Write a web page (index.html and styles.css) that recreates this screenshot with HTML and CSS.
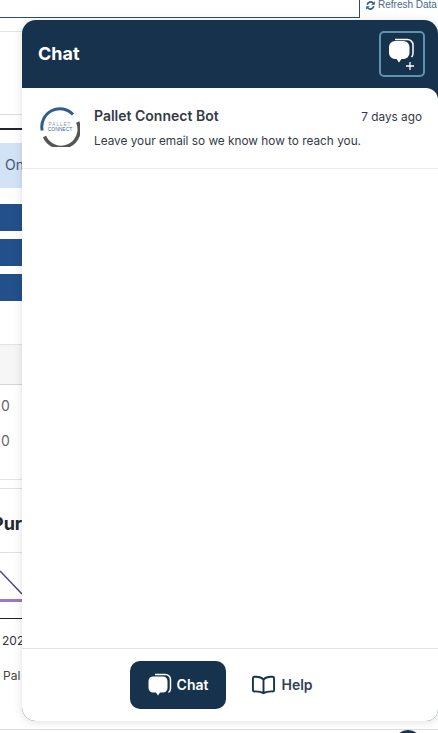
FILE: index.html
```html
<!DOCTYPE html>
<html lang="en">
<head>
<meta charset="utf-8">
<title>Chat</title>
<link rel="stylesheet" href="styles.css">
</head>
<body>
<div class="page">
  <div class="topbar">
    <div class="search"></div>
    <div class="refresh">
      <svg class="refresh-icon" viewBox="0 0 12 12" aria-hidden="true"><path d="M1.500 5.200a4.600 4.600 0 0 1 7.900-2.500L10.800 1.300v4H6.800L8.200 3.900A2.900 2.900 0 0 0 3.300 5.400zM10.500 6.800a4.600 4.600 0 0 1-7.900 2.500L1.200 10.700v-4h4L3.800 8.100A2.900 2.900 0 0 0 8.700 6.600z"/></svg>
      <span>Refresh Data</span>
    </div>
  </div>
  <div class="sub-a"></div>
  <div class="tab-line"></div>
  <div class="notice"><span>On</span></div>
  <div class="bars">
    <div class="bar"></div>
    <div class="bar"></div>
    <div class="bar"></div>
  </div>
  <div class="table-head"></div>
  <div class="table-row">0</div>
  <div class="table-row">0</div>
  <div class="divider"></div>
  <div class="section-title"><span>Pur</span></div>
  <div class="chart">
    <svg class="chart-line" viewBox="0 0 22 24" aria-hidden="true"><path d="M0 0 L22 23"/></svg>
    <div class="chart-purple"></div>
  </div>
  <div class="axis">202</div>
  <div class="legend">Pal</div>
  <div class="foot"></div>
</div>
<div class="launcher"></div>

<section class="panel">
  <header class="panel-head">
    <h1 class="panel-title">Chat</h1>
    <button class="new-chat" type="button" aria-label="New chat">
      <svg class="bubbles-lg" viewBox="0 0 32 32" aria-hidden="true">
        <path class="bubble-back" d="M9 1.500h12.500a5.500 5.500 0 0 1 5.500 5.500v8.500a5.500 5.500 0 0 1-1.500 3.500"/>
        <path class="bubble-front" d="M9 3h8.500a6 6 0 0 1 6 6v6a6 6 0 0 1-6 6h-2L13 24.500 10.500 21H9a6 6 0 0 1-6-6V9a6 6 0 0 1 6-6z"/>
        <path class="plus" d="M24 24v8M20 28h8"/>
      </svg>
    </button>
  </header>

  <div class="panel-body">
    <article class="convo">
      <svg class="logo" viewBox="0 0 40 40" role="img" aria-label="Pallet Connect">
        <path class="ring-blue" d="M2.200 23.500A18 18 0 0 1 33 7.500"/>
        <path class="ring-gray" d="M37.700 15A18 18 0 0 1 4.500 29.500"/>
        <text class="logo-top" x="20" y="18.500" text-anchor="middle">PALLET</text>
        <text class="logo-bottom" x="20" y="24" text-anchor="middle">CONNECT</text>
      </svg>
      <div class="convo-main">
        <div class="convo-top">
          <span class="convo-name">Pallet Connect Bot</span>
          <span class="convo-time">7 days ago</span>
        </div>
        <p class="convo-text">Leave your email so we know how to reach you.</p>
      </div>
    </article>
  </div>

  <nav class="panel-nav">
    <button class="nav-btn nav-active" type="button">
      <svg class="nav-icon-chat" viewBox="0 0 24 24" aria-hidden="true">
        <path class="bubble-back-sm" d="M7 1.500h10.500a5 5 0 0 1 5 5v9a5 5 0 0 1-2 4"/>
        <path class="bubble-front" d="M5 3.500h10a4.500 4.500 0 0 1 4.500 4.500v7a4.500 4.500 0 0 1-4.500 4.500h-3l-2 3-2-3H5a4.500 4.500 0 0 1-4.500-4.500V8A4.500 4.500 0 0 1 5 3.500z"/>
      </svg>
      <span>Chat</span>
    </button>
    <button class="nav-btn" type="button">
      <svg class="nav-icon-help" viewBox="0 0 26 20" aria-hidden="true">
        <path d="M13 4.500C11 2 7.500 1.200 3.500 1.500 2.500 1.600 2 2.200 2 3v12.500c0 .8.500 1.200 1.300 1.200 3.700-.2 7.200.3 9.700 1.800 2.500-1.500 6-2 9.700-1.800.8 0 1.300-.4 1.300-1.200V3c0-.8-.5-1.400-1.500-1.500C18.500 1.200 15 2 13 4.500zM13 4.500v14"/>
      </svg>
      <span>Help</span>
    </button>
  </nav>
</section>
</body>
</html>
```
FILE: styles.css
```css
* { box-sizing: border-box; }
html, body { margin: 0; padding: 0; height: 733px; overflow: hidden; background: #fff; }
body { position: relative; font-family: Inter, "Liberation Sans", sans-serif; color: #2f3542; }

.page { display: flex; flex-direction: column; height: 733px; width: 438px; overflow: hidden; font-size: 13px; color: #444; }
.topbar { display: flex; height: 18px; flex: none; }
.search { width: 360px; height: 18px; border-bottom: 1px solid #2c4f5e; border-right: 1px solid #2c4f5e; }
.refresh { display: flex; align-items: flex-start; gap: 2px; padding: 0 0 0 5px; white-space: nowrap; font-size: 10px; line-height: 10px; color: #4a6a8a; font-family: "Liberation Sans", sans-serif; }
.refresh-icon { width: 11px; height: 11px; fill: #35618f; flex: none; }
.sub-a { height: 84px; margin-top: 13px; border-top: 1px solid #e4e4e4; border-bottom: 1px solid #dedede; flex: none; }
.tab-line { height: 2px; margin-top: 13px; background: #24242a; flex: none; }
.notice { height: 45px; margin-top: 13px; background: #d3e3f6; padding: 12px 0 0 5px; line-height: 20px; font-size: 14px; color: #41566e; flex: none; }
.bars { display: flex; flex-direction: column; gap: 8px; margin-top: 16px; flex: none; }
.bar { height: 27px; background: #23508a; }
.table-head { height: 41px; margin-top: 43px; background: #f6f6f6; border-top: 1px solid #e3e3e3; border-bottom: 1px solid #d6d6d6; flex: none; }
.table-row { height: 35px; padding-left: 1px; line-height: 42px; font-size: 14px; color: #666; flex: none; }
.divider { height: 1px; margin-top: 24px; background: #e4e4e4; flex: none; }
.section-title { height: 65px; margin-top: 8px; border-top: 1px solid #e0e0e0; border-bottom: 1px solid #e2e2e2; font-weight: 700; font-size: 18px; line-height: 70px; color: #26262b; flex: none; }
.section-title span { display: inline-block; margin-left: -8px; }
.chart { height: 66px; border-bottom: 1px solid #222; flex: none; }
.chart-line { display: block; width: 22px; height: 24px; overflow: visible; fill: none; stroke: #4a4686; stroke-width: 1.500; margin-top: 18px; }
.chart-purple { height: 3px; margin-top: 4px; background: #9a78c2; }
.axis { height: 37px; padding-left: 2px; line-height: 44px; font-size: 12px; color: #333; flex: none; }
.legend { height: 46px; padding-left: 3px; line-height: 40px; font-size: 12px; color: #444; flex: none; }
.foot { height: 28px; border-bottom: 1px solid #dcdcdc; flex: none; }
.launcher { position: absolute; left: 394px; top: 730px; width: 28px; height: 28px; border-radius: 50%; background: #17324d; }

.panel { position: absolute; left: 22px; top: 20px; width: 416px; height: 701px; display: flex; flex-direction: column; background: #17324d; border-radius: 14px 14px 12px 14px; box-shadow: 0 1px 10px rgba(0, 0, 0, .13); overflow: hidden; }
.panel-head { height: 68px; padding: 0 13px 0 16px; display: flex; align-items: flex-start; justify-content: space-between; flex: none; }
.panel-title { margin: 22px 0 0; font-size: 18px; line-height: 24px; font-weight: 700; color: #fff; }
.new-chat { width: 46px; height: 46px; margin-top: 11px; padding: 0; display: flex; align-items: center; justify-content: center; background: transparent; border: 2px solid #5e93ad; border-radius: 5px; }
.bubbles-lg { width: 32px; height: 32px; overflow: visible; }
.bubble-front { fill: #fff; }
.bubble-back { fill: none; stroke: #fff; stroke-width: 1.500; }
.bubble-back-sm { fill: none; stroke: #fff; stroke-width: 1.500; }
.plus { fill: none; stroke: #fff; stroke-width: 1.300; }

.panel-body { flex: 1; background: #fff; border-radius: 0 12px 0 0; }
.convo { display: flex; gap: 14px; height: 81px; padding: 19px 16px 0 18px; border-bottom: 1px solid #ececec; }
.logo { width: 40px; height: 40px; flex: none; }
.ring-blue { fill: none; stroke: #2f5d8e; stroke-width: 3; }
.ring-gray { fill: none; stroke: #555; stroke-width: 3.500; }
.logo-top { font-size: 4.600px; letter-spacing: 1px; fill: #8b95a0; font-family: "Liberation Sans", sans-serif; }
.logo-bottom { font-size: 5px; fill: #3d6a9a; font-family: "Liberation Sans", sans-serif; }
.convo-main { flex: 1; min-width: 0; }
.convo-top { display: flex; justify-content: space-between; align-items: baseline; }
.convo-name { font-size: 14px; line-height: 18px; font-weight: 600; color: #333a47; }
.convo-time { font-size: 11.800px; line-height: 18px; color: #333a47; }
.convo-text { margin: 6px 0 0; font-size: 11.800px; line-height: 18px; color: #333a47; }

.panel-nav { height: 73px; display: flex; align-items: flex-start; justify-content: center; gap: 8px; padding-top: 12px; border-top: 1px solid #e4e4e4; background: #fff; flex: none; }
.nav-btn { display: flex; align-items: center; justify-content: center; gap: 5px; height: 48px; width: 96px; padding: 0; border: 0; border-radius: 10px; background: transparent; font: 600 14px/18px Inter, "Liberation Sans", sans-serif; color: #2f3f57; }
.nav-active { background: #17324d; color: #fff; }
.nav-icon-chat { width: 24px; height: 24px; }
.nav-icon-help { width: 25px; height: 20px; fill: none; stroke: #17324d; stroke-width: 2; stroke-linejoin: round; }
```
